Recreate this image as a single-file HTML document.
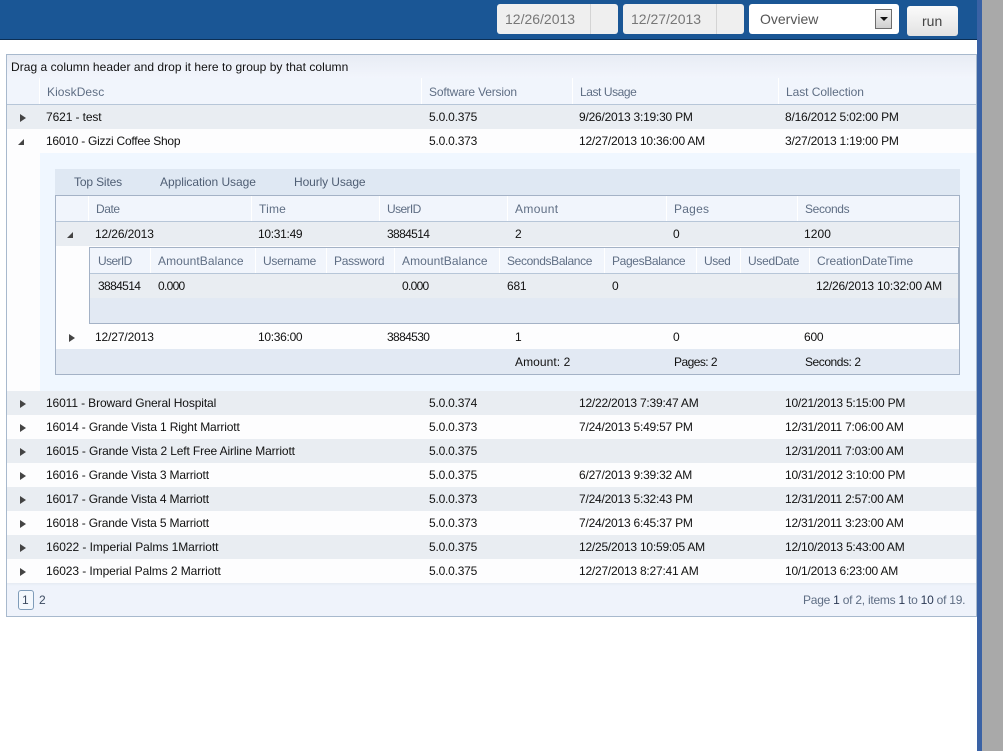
<!DOCTYPE html>
<html><head><meta charset="utf-8">
<style>
html,body{margin:0;padding:0;background:#fff;}
body{width:1003px;height:751px;overflow:hidden;position:relative;font:12px/14px "Liberation Sans",sans-serif;color:#111;}
.b{position:absolute;box-sizing:border-box;}
.t{position:absolute;white-space:nowrap;line-height:14px;letter-spacing:-.22px;}
.h{color:#5f6e84;}
.n{letter-spacing:-.63px;}
.sep{position:absolute;width:1px;background:#fff;}
.r{position:absolute;width:0;height:0;border-top:4px solid transparent;border-bottom:4px solid transparent;border-left:6px solid #444;}
.d{position:absolute;width:0;height:0;border-bottom:6px solid #444;border-left:6px solid transparent;}
</style></head><body>
<!-- right edge -->
<div class="b" style="left:977px;top:0;width:5px;height:751px;background:#3a62a5;"></div>
<div class="b" style="left:982px;top:0;width:21px;height:751px;background:#a9a9a9;"></div>
<!-- top bar -->
<div class="b" style="left:0;top:0;width:977px;height:39px;background:#1a5695;"></div>
<div class="b" style="left:0;top:39px;width:977px;height:1px;background:#0c2f55;"></div>
<div class="b" style="left:497px;top:4px;width:121px;height:30px;background:#efefef;border-radius:3px;"></div>
<div class="b" style="left:590px;top:4px;width:1px;height:30px;background:#d4d4d4;"></div>
<div class="t" style="left:505px;top:11px;font-size:14px;line-height:16px;letter-spacing:0;color:#777;">12/26/2013</div>
<div class="b" style="left:623px;top:4px;width:121px;height:30px;background:#efefef;border-radius:3px;"></div>
<div class="b" style="left:716px;top:4px;width:1px;height:30px;background:#d4d4d4;"></div>
<div class="t" style="left:631px;top:11px;font-size:14px;line-height:16px;letter-spacing:0;color:#777;">12/27/2013</div>
<div class="b" style="left:749px;top:4px;width:150px;height:30px;background:#fff;border-radius:3px;"></div>
<div class="t" style="left:760px;top:11px;font-size:14px;line-height:16px;letter-spacing:0;color:#555;">Overview</div>
<div class="b" style="left:875px;top:9px;width:17px;height:20px;background:linear-gradient(#f2f2f2,#cfcfcf);border:1px solid #6d6d6d;"></div>
<div class="b" style="left:880px;top:17px;width:0;height:0;border-left:4px solid transparent;border-right:4px solid transparent;border-top:4px solid #111;"></div>
<div class="b" style="left:907px;top:6px;width:51px;height:30px;background:linear-gradient(#fbfbfb,#e2e2e2);border-radius:3px;"></div>
<div class="t" style="left:922px;top:13px;font-size:14px;line-height:16px;letter-spacing:0;color:#444;">run</div>

<!-- main grid -->
<div class="b" style="left:6px;top:54px;width:971px;height:563px;border:1px solid #a8b9cd;background:#fff;"></div>
<div class="b" style="left:7px;top:55px;width:969px;height:23px;background:linear-gradient(#e8ecf4,#f2f5fc);"></div>
<div class="t" style="left:11px;top:60px;letter-spacing:.04px;">Drag a column header and drop it here to group by that column</div>
<div class="b" style="left:7px;top:78px;width:969px;height:27px;background:#f1f5fc;border-bottom:1px solid #b7c6d8;"></div>
<div class="sep" style="left:39px;top:78px;height:26px;"></div>
<div class="sep" style="left:421px;top:78px;height:26px;"></div>
<div class="sep" style="left:572px;top:78px;height:26px;"></div>
<div class="sep" style="left:778px;top:78px;height:26px;"></div>
<div class="t h" style="left:47px;top:85px;letter-spacing:.07px;">KioskDesc</div>
<div class="t h" style="left:429px;top:85px;letter-spacing:-.18px;">Software Version</div>
<div class="t h" style="left:580px;top:85px;letter-spacing:-.43px;">Last Usage</div>
<div class="t h" style="left:786px;top:85px;letter-spacing:-.06px;">Last Collection</div>

<!-- rows -->
<div class="b" style="left:7px;top:105px;width:969px;height:24px;background:#e9edf2;"></div>
<div class="b" style="left:7px;top:129px;width:969px;height:24px;background:#fdfdfe;"></div>
<div class="b" style="left:7px;top:153px;width:33px;height:238px;background:#fdfdfe;"></div>
<div class="b" style="left:40px;top:153px;width:936px;height:238px;background:#f0f7ff;"></div>
<div class="b" style="left:7px;top:391px;width:969px;height:24px;background:#e9edf2;"></div>
<div class="b" style="left:7px;top:415px;width:969px;height:24px;background:#fdfdfe;"></div>
<div class="b" style="left:7px;top:439px;width:969px;height:24px;background:#e9edf2;"></div>
<div class="b" style="left:7px;top:463px;width:969px;height:24px;background:#fdfdfe;"></div>
<div class="b" style="left:7px;top:487px;width:969px;height:24px;background:#e9edf2;"></div>
<div class="b" style="left:7px;top:511px;width:969px;height:24px;background:#fdfdfe;"></div>
<div class="b" style="left:7px;top:535px;width:969px;height:24px;background:#e9edf2;"></div>
<div class="b" style="left:7px;top:559px;width:969px;height:24px;background:#fdfdfe;"></div>

<div class="r" style="left:20px;top:114px;"></div>
<div class="t" style="left:46px;top:110px;letter-spacing:-.11px;">7621 - test</div><div class="t" style="left:429px;top:110px;">5.0.0.375</div><div class="t" style="left:579px;top:110px;">9/26/2013 3:19:30 PM</div><div class="t" style="left:785px;top:110px;">8/16/2012 5:02:00 PM</div>
<div class="d" style="left:18px;top:139px;"></div>
<div class="t" style="left:46px;top:134px;letter-spacing:-.25px;">16010 - Gizzi Coffee Shop</div><div class="t" style="left:429px;top:134px;">5.0.0.373</div><div class="t" style="left:579px;top:134px;">12/27/2013 10:36:00 AM</div><div class="t" style="left:785px;top:134px;">3/27/2013 1:19:00 PM</div>

<div class="r" style="left:20px;top:400px;"></div>
<div class="t" style="left:46px;top:396px;letter-spacing:-.12px;">16011 - Broward Gneral Hospital</div><div class="t" style="left:429px;top:396px;">5.0.0.374</div><div class="t" style="left:579px;top:396px;">12/22/2013 7:39:47 AM</div><div class="t" style="left:785px;top:396px;">10/21/2013 5:15:00 PM</div>
<div class="r" style="left:20px;top:424px;"></div>
<div class="t" style="left:46px;top:420px;letter-spacing:-.15px;">16014 - Grande Vista 1 Right Marriott</div><div class="t" style="left:429px;top:420px;">5.0.0.373</div><div class="t" style="left:579px;top:420px;">7/24/2013 5:49:57 PM</div><div class="t" style="left:785px;top:420px;">12/31/2011 7:06:00 AM</div>
<div class="r" style="left:20px;top:448px;"></div>
<div class="t" style="left:46px;top:444px;letter-spacing:-.13px;">16015 - Grande Vista 2 Left Free Airline Marriott</div><div class="t" style="left:429px;top:444px;">5.0.0.375</div><div class="t" style="left:785px;top:444px;">12/31/2011 7:03:00 AM</div>
<div class="r" style="left:20px;top:472px;"></div>
<div class="t" style="left:46px;top:468px;letter-spacing:-.16px;">16016 - Grande Vista 3 Marriott</div><div class="t" style="left:429px;top:468px;">5.0.0.375</div><div class="t" style="left:579px;top:468px;">6/27/2013 9:39:32 AM</div><div class="t" style="left:785px;top:468px;">10/31/2012 3:10:00 PM</div>
<div class="r" style="left:20px;top:496px;"></div>
<div class="t" style="left:46px;top:492px;letter-spacing:-.16px;">16017 - Grande Vista 4 Marriott</div><div class="t" style="left:429px;top:492px;">5.0.0.373</div><div class="t" style="left:579px;top:492px;">7/24/2013 5:32:43 PM</div><div class="t" style="left:785px;top:492px;">12/31/2011 2:57:00 AM</div>
<div class="r" style="left:20px;top:520px;"></div>
<div class="t" style="left:46px;top:516px;letter-spacing:-.16px;">16018 - Grande Vista 5 Marriott</div><div class="t" style="left:429px;top:516px;">5.0.0.373</div><div class="t" style="left:579px;top:516px;">7/24/2013 6:45:37 PM</div><div class="t" style="left:785px;top:516px;">12/31/2011 3:23:00 AM</div>
<div class="r" style="left:20px;top:544px;"></div>
<div class="t" style="left:46px;top:540px;letter-spacing:-.05px;">16022 - Imperial Palms 1Marriott</div><div class="t" style="left:429px;top:540px;">5.0.0.375</div><div class="t" style="left:579px;top:540px;">12/25/2013 10:59:05 AM</div><div class="t" style="left:785px;top:540px;">12/10/2013 5:43:00 AM</div>
<div class="r" style="left:20px;top:568px;"></div>
<div class="t" style="left:46px;top:564px;letter-spacing:-.08px;">16023 - Imperial Palms 2 Marriott</div><div class="t" style="left:429px;top:564px;">5.0.0.375</div><div class="t" style="left:579px;top:564px;">12/27/2013 8:27:41 AM</div><div class="t" style="left:785px;top:564px;">10/1/2013 6:23:00 AM</div>

<!-- pager -->
<div class="b" style="left:7px;top:583px;width:969px;height:33px;background:linear-gradient(#e6ebf3,#eff3fb 3px);"></div>
<div class="b" style="left:18px;top:590px;width:16px;height:20px;border:1px solid #7f9cb9;border-radius:3px;background:#f4f8fd;"></div>
<div class="t" style="left:22px;top:593px;color:#3c4a60;">1</div>
<div class="t" style="left:39px;top:593px;color:#3c4a60;">2</div>
<div class="t h" style="left:803px;top:593px;letter-spacing:-.24px;">Page <span style="color:#2c3a55">1</span> of 2, items <span style="color:#2c3a55">1</span> to <span style="color:#2c3a55">10</span> of 19.</div>

<!-- tabs -->
<div class="b" style="left:55px;top:169px;width:905px;height:26px;background:#dfe8f3;"></div>
<div class="t" style="left:74px;top:175px;color:#4f5e74;letter-spacing:-.15px;">Top Sites</div>
<div class="t" style="left:160px;top:175px;color:#4f5e74;letter-spacing:-.05px;">Application Usage</div>
<div class="t" style="left:294px;top:175px;color:#4f5e74;letter-spacing:-.1px;">Hourly Usage</div>

<!-- nested grid -->
<div class="b" style="left:55px;top:195px;width:905px;height:180px;border:1px solid #a4b2c6;background:#fdfdfe;"></div>
<div class="b" style="left:56px;top:196px;width:903px;height:26px;background:#f1f5fc;border-bottom:1px solid #b7c6d8;"></div>
<div class="sep" style="left:88px;top:196px;height:25px;"></div>
<div class="sep" style="left:251px;top:196px;height:25px;"></div>
<div class="sep" style="left:379px;top:196px;height:25px;"></div>
<div class="sep" style="left:507px;top:196px;height:25px;"></div>
<div class="sep" style="left:666px;top:196px;height:25px;"></div>
<div class="sep" style="left:797px;top:196px;height:25px;"></div>
<div class="t h" style="left:96px;top:202px;letter-spacing:-.43px;">Date</div>
<div class="t h" style="left:259px;top:202px;letter-spacing:.2px;">Time</div>
<div class="t h" style="left:387px;top:202px;letter-spacing:-.6px;">UserID</div>
<div class="t h" style="left:515px;top:202px;letter-spacing:.35px;">Amount</div>
<div class="t h" style="left:674px;top:202px;letter-spacing:.25px;">Pages</div>
<div class="t h" style="left:805px;top:202px;letter-spacing:-.35px;">Seconds</div>

<div class="b" style="left:56px;top:222px;width:903px;height:24px;background:#e9edf2;"></div>
<div class="d" style="left:67px;top:232px;"></div>
<div class="t" style="left:95px;top:227px;letter-spacing:-.13px;">12/26/2013</div><div class="t" style="left:258px;top:227px;letter-spacing:-.3px;">10:31:49</div><div class="t n" style="left:387px;top:227px;">3884514</div><div class="t" style="left:515px;top:227px;">2</div><div class="t" style="left:673px;top:227px;">0</div><div class="t" style="left:804px;top:227px;letter-spacing:.07px;">1200</div>

<!-- inner grid -->
<div class="b" style="left:89px;top:247px;width:870px;height:77px;border:1px solid #a4b2c6;background:#e2e9f3;"></div>
<div class="b" style="left:90px;top:248px;width:868px;height:26px;background:#f1f5fc;border-bottom:1px solid #b7c6d8;"></div>
<div class="sep" style="left:150px;top:248px;height:25px;"></div>
<div class="sep" style="left:255px;top:248px;height:25px;"></div>
<div class="sep" style="left:326px;top:248px;height:25px;"></div>
<div class="sep" style="left:394px;top:248px;height:25px;"></div>
<div class="sep" style="left:499px;top:248px;height:25px;"></div>
<div class="sep" style="left:604px;top:248px;height:25px;"></div>
<div class="sep" style="left:696px;top:248px;height:25px;"></div>
<div class="sep" style="left:740px;top:248px;height:25px;"></div>
<div class="sep" style="left:809px;top:248px;height:25px;"></div>
<div class="t h" style="left:98px;top:254px;letter-spacing:-.6px;">UserID</div>
<div class="t h" style="left:158px;top:254px;letter-spacing:.07px;">AmountBalance</div>
<div class="t h" style="left:263px;top:254px;letter-spacing:-.3px;">Username</div>
<div class="t h" style="left:334px;top:254px;letter-spacing:-.3px;">Password</div>
<div class="t h" style="left:402px;top:254px;letter-spacing:.07px;">AmountBalance</div>
<div class="t h" style="left:507px;top:254px;letter-spacing:-.36px;">SecondsBalance</div>
<div class="t h" style="left:612px;top:254px;letter-spacing:-.35px;">PagesBalance</div>
<div class="t h" style="left:704px;top:254px;letter-spacing:-.4px;">Used</div>
<div class="t h" style="left:748px;top:254px;letter-spacing:-.3px;">UsedDate</div>
<div class="t h" style="left:817px;top:254px;letter-spacing:-.05px;">CreationDateTime</div>
<div class="b" style="left:90px;top:274px;width:868px;height:24px;background:#e9edf2;"></div>
<div class="t n" style="left:98px;top:279px;">3884514</div><div class="t" style="left:158px;top:279px;letter-spacing:-.7px;">0.000</div><div class="t" style="left:402px;top:279px;letter-spacing:-.7px;">0.000</div><div class="t" style="left:507px;top:279px;">681</div><div class="t" style="left:612px;top:279px;">0</div><div class="t" style="left:816px;top:279px;">12/26/2013 10:32:00 AM</div>

<div class="r" style="left:69px;top:334px;"></div>
<div class="t" style="left:95px;top:330px;letter-spacing:-.13px;">12/27/2013</div><div class="t" style="left:258px;top:330px;letter-spacing:-.3px;">10:36:00</div><div class="t n" style="left:387px;top:330px;">3884530</div><div class="t" style="left:515px;top:330px;">1</div><div class="t" style="left:673px;top:330px;">0</div><div class="t" style="left:804px;top:330px;">600</div>

<div class="b" style="left:56px;top:349px;width:903px;height:25px;background:#e2e9f3;"></div>
<div class="t" style="left:515px;top:355px;letter-spacing:.07px;">Amount: 2</div><div class="t" style="left:674px;top:355px;letter-spacing:-.55px;">Pages: 2</div><div class="t" style="left:805px;top:355px;letter-spacing:-.45px;">Seconds: 2</div>
</body></html>
